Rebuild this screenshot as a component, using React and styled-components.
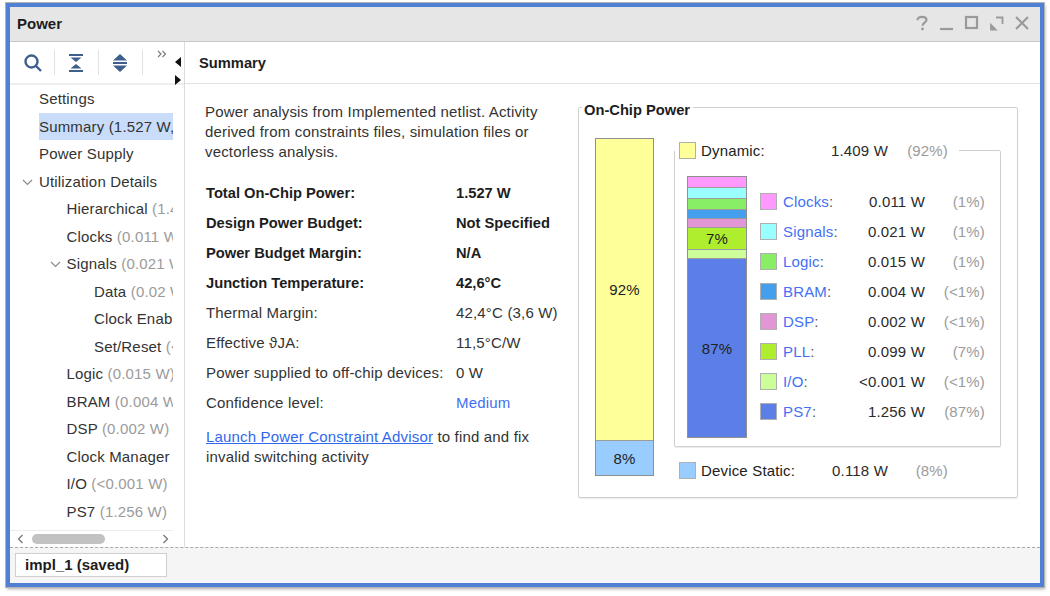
import React from "react";
import styled, { createGlobalStyle } from "styled-components";

const Global = createGlobalStyle`
  html, body { margin: 0; padding: 0; background: #fff; }
  body { font-family: "Liberation Sans", Arial, sans-serif; font-size: 15px; letter-spacing: 0.17px; color: #222; }
  #root { width: 1050px; height: 596px; overflow: hidden; }
`;

const Win = styled.div`
  box-sizing: border-box;
  margin: 3px 0 0 6px;
  width: 1038px;
  height: 584px;
  border: 4px solid #4f80d3;
  display: flex;
  flex-direction: column;
  box-shadow: 0 0 0 1px #b4b4b4, 1px 2px 3px rgba(0, 0, 0, 0.35);
  background: #fff;
`;
const TitleBar = styled.div`
  height: 35px;
  box-sizing: border-box;
  flex: none;
  background: #e6e6e6;
  border-bottom: 1px solid #c8c8c8;
  display: flex;
  align-items: center;
  padding: 0 10px 2px 7px;
`;
const Title = styled.div`
  font-weight: 700;
  font-size: 15px;
  letter-spacing: 0;
  color: #1d1d1d;
  flex: 1;
`;
const WinBtns = styled.div`
  display: flex;
  gap: 9px;
  align-items: center;
`;
const Body = styled.div`
  flex: 1;
  min-height: 0;
  display: flex;
`;
const Side = styled.div`
  position: relative;
  width: 175px;
  box-sizing: border-box;
  flex: none;
  border-right: 1px solid #dcdcdc;
  display: flex;
  flex-direction: column;
`;
const Toolbar = styled.div`
  height: 43px;
  box-sizing: border-box;
  flex: none;
  border-bottom: 2px solid #eeeeee;
  display: flex;
  align-items: center;
  padding-left: 12px;
`;
const ToolBtn = styled.div`
  width: 22px;
  display: flex;
  justify-content: center;
`;
const ToolSep = styled.div`
  width: 1px;
  height: 25px;
  background: #e2e2e2;
  margin: 0 10px 0 11px;
  &:nth-child(2) { margin-left: 10px; }
`;
const More = styled.div`
  align-self: flex-start;
  margin: 8px 0 0 4px;
  line-height: 0;
`;
const Splitter = styled.div`
  position: absolute;
  left: 165px;
  top: ${(p) => p.$top}px;
  width: 0;
  height: 0;
  border-top: 5.5px solid transparent;
  border-bottom: 5.5px solid transparent;
  ${(p) => (p.$dir === "left" ? "border-right: 6px solid #111;" : "border-left: 6px solid #111;")}
`;
const Tree = styled.div`
  flex: 1;
  min-height: 0;
  width: 163px;
  overflow: hidden;
`;
const Row = styled.div`
  position: relative;
  height: 27.53px;
  display: flex;
  align-items: center;
  padding-left: ${(p) => 29 + p.$level * 27.5}px;
  white-space: nowrap;
  color: #333;
`;
const Label = styled.div`
  flex: 1;
  height: 100%;
  line-height: 27.53px;
  background: ${(p) => (p.$selected ? "#c9ddfa" : "transparent")};
`;
const Dim = styled.span`
  color: #9b9b9b;
`;
const Chevron = styled.svg`
  position: absolute;
  left: ${(p) => 12 + p.$level * 27.5}px;
  top: 11px;
`;
const HScroll = styled.div`
  height: 17px;
  width: 163px;
  flex: none;
  border-top: 1px solid #ececec;
  box-sizing: border-box;
  display: flex;
  align-items: center;
  padding: 0 4px 0 7px;
  gap: 8px;
`;
const Track = styled.div`
  flex: 1;
`;
const Thumb = styled.div`
  width: 73px;
  height: 10px;
  border-radius: 5px;
  background: #c2c2c2;
`;
const Main = styled.div`
  flex: 1;
  min-width: 0;
  display: flex;
  flex-direction: column;
`;
const MainHead = styled.div`
  height: 42px;
  box-sizing: border-box;
  flex: none;
  border-bottom: 1px solid #e2e2e2;
  display: flex;
  align-items: center;
  padding-left: 14px;
  font-weight: 700;
  font-size: 14.7px;
  letter-spacing: 0;
  color: #1d1d1d;
`;
const Content = styled.div`
  flex: 1;
  display: flex;
  min-height: 0;
`;
const Left = styled.div`
  width: 393px;
  flex: none;
  padding: 18px 0 0 20px;
  box-sizing: border-box;
  color: #333;
`;
const Para = styled.p`
  margin: 0;
  line-height: 20px;
`;
const Facts = styled.div`
  margin-top: 16px;
  margin-left: 1px;
`;
const Fact = styled.div`
  display: grid;
  grid-template-columns: 250px 1fr;
  height: 30px;
  box-sizing: border-box;
  padding-bottom: ${(p) => (p.$bold ? 0 : 2)}px;
  align-items: center;
  white-space: nowrap;
  font-weight: ${(p) => (p.$bold ? 700 : 400)};
  font-size: ${(p) => (p.$bold ? "14.7px" : "15px")};
  letter-spacing: ${(p) => (p.$bold ? "0" : "0.17px")};
  color: ${(p) => (p.$bold ? "#1d1d1d" : "#333")};
`;
const Link = styled.span`
  color: #3f6ff2;
`;
const Advisor = styled.p`
  margin: 9px 0 0 1px;
  line-height: 20px;
`;
const Under = styled.a`
  color: #2f68ee;
  text-decoration: underline;
`;
const Chart = styled.fieldset`
  box-sizing: border-box;
  margin: 12px 0 0 0;
  width: 440px;
  height: 402px;
  padding: 20px 16px 0;
  border: 1px solid #cfcfcf;
  border-radius: 2px;
  box-shadow: 0 1px 1px rgba(0, 0, 0, 0.08);
  display: flex;
`;
const ChartLegend = styled.legend`
  font-weight: 700;
  font-size: 14.7px;
  letter-spacing: 0;
  color: #1d1d1d;
  margin-left: -13px;
  padding: 6px 3px 0 2px;
  line-height: 16px;
`;
const Flex = styled.div`
  display: flex;
  align-items: flex-start;
`;
const MainBar = styled.div`
  width: 59px;
  height: 338px;
  box-sizing: border-box;
  border: 1px solid #8f8f8f;
  display: flex;
  flex-direction: column;
  flex: none;
`;
const Seg = styled.div`
  height: ${(p) => p.$h}px;
  flex: ${(p) => (p.$fill ? "1" : "none")};
  box-sizing: border-box;
  background: ${(p) => p.$c};
  border-top: ${(p) => (p.$first ? "none" : "1px solid #9c9c9c")};
  display: flex;
  align-items: center;
  justify-content: center;
  color: #222;
`;
const RightCol = styled.div`
  margin: 3px 0 0 20px;
  width: 327px;
  flex: none;
`;
const Group = styled.fieldset`
  box-sizing: border-box;
  margin: 0;
  width: 327px;
  height: 306px;
  padding: 17px 12px 0;
  border: 1px solid #cfcfcf;
  border-radius: 2px;
  box-shadow: 0 1px 1px rgba(0, 0, 0, 0.08);
  display: flex;
  gap: 13px;
`;
const GroupLegend = styled.legend`
  margin-left: -12px;
  padding: 0 11px 0 4px;
`;
const TopRow = styled.div`
  display: grid;
  grid-template-columns: 17px 110px 82px 60px;
  height: 18px;
  align-items: center;
  margin-left: ${(p) => p.$ml || 0}px;
  margin-top: ${(p) => p.$mt || 0}px;
`;
const Name = styled.span`
  padding-left: 5px;
  white-space: nowrap;
`;
const Value = styled.span`
  text-align: right;
  white-space: nowrap;
  color: #2b2b2b;
`;
const Pct = styled.span`
  text-align: right;
  white-space: nowrap;
  color: #9b9b9b;
`;
const Swatch = styled.span`
  width: 17px;
  height: 17px;
  box-sizing: border-box;
  border: 1px solid #b0b0b0;
  background: ${(p) => p.$c};
  display: block;
`;
const Stack = styled.div`
  width: 60px;
  height: 262px;
  box-sizing: border-box;
  border: 1px solid #8f8f8f;
  display: flex;
  flex-direction: column;
  flex: none;
`;
const Items = styled.div`
  margin-top: 10px;
`;
const Item = styled.div`
  display: grid;
  grid-template-columns: 17px 66px 82px 60px;
  height: 30px;
  align-items: center;
`;
const ItemName = styled.span`
  padding-left: 6px;
  white-space: nowrap;
  color: #555;
`;
const ItemLink = styled.span`
  color: #4470f5;
`;
const Footer = styled.div`
  height: 36px;
  flex: none;
  box-sizing: border-box;
  background: #f5f5f5;
  border-top: 1px dashed #a8a8a8;
  padding: 5px 0 0 5px;
`;
const Tab = styled.div`
  width: 152px;
  height: 24px;
  box-sizing: border-box;
  background: #fff;
  border: 1px solid #d0d0d0;
  font-weight: 700;
  font-size: 15px;
  letter-spacing: 0;
  line-height: 22px;
  padding-left: 9px;
  color: #1d1d1d;
`;

const treeData = [
  { t: "Settings", l: 0 },
  { t: "Summary (1.527 W, Confidence", l: 0, sel: true },
  { t: "Power Supply", l: 0 },
  { t: "Utilization Details", l: 0, open: true },
  { t: "Hierarchical", d: " (1.409 W)", l: 1 },
  { t: "Clocks", d: " (0.011 W)", l: 1 },
  { t: "Signals", d: " (0.021 W)", l: 1, open: true },
  { t: "Data", d: " (0.02 W)", l: 2 },
  { t: "Clock Enable", d: " (0.001 W)", l: 2 },
  { t: "Set/Reset", d: " (<0.001 W)", l: 2 },
  { t: "Logic", d: " (0.015 W)", l: 1 },
  { t: "BRAM", d: " (0.004 W)", l: 1 },
  { t: "DSP", d: " (0.002 W)", l: 1 },
  { t: "Clock Manager", d: " (0.099 W)", l: 1 },
  { t: "I/O", d: " (<0.001 W)", l: 1 },
  { t: "PS7", d: " (1.256 W)", l: 1 },
];

const facts = [
  ["Total On-Chip Power:", "1.527 W", true],
  ["Design Power Budget:", "Not Specified", true],
  ["Power Budget Margin:", "N/A", true],
  ["Junction Temperature:", "42,6°C", true],
  ["Thermal Margin:", "42,4°C (3,6 W)"],
  ["Effective ϑJA:", "11,5°C/W"],
  ["Power supplied to off-chip devices:", "0 W"],
  ["Confidence level:", <Link key="m">Medium</Link>],
];

const items = [
  ["Clocks", "0.011 W", "(1%)", "#ff99ff"],
  ["Signals", "0.021 W", "(1%)", "#99ffff"],
  ["Logic", "0.015 W", "(1%)", "#88ee66"],
  ["BRAM", "0.004 W", "(<1%)", "#44a0ee"],
  ["DSP", "0.002 W", "(<1%)", "#e396d6"],
  ["PLL", "0.099 W", "(7%)", "#afee2e"],
  ["I/O", "<0.001 W", "(<1%)", "#ccff99"],
  ["PS7", "1.256 W", "(87%)", "#5b7fe6"],
];

const stack = [
  ["#ff99ff", 10],
  ["#99ffff", 11],
  ["#88ee66", 11],
  ["#44a0ee", 9],
  ["#e396d6", 9],
  ["#afee2e", 22, "7%"],
  ["#ccff99", 9],
  ["#5b7fe6", 0, "87%"],
];

const Gray = "#9a9a9a";

function WindowIcons() {
  return (
    <WinBtns>
      <svg width="16" height="16" viewBox="0 0 16 16" fill="none" stroke={Gray} strokeWidth="2.2">
        <path d="M3.500 5.200C3.500 3 5.500 1.800 8 1.800s4.500 1.200 4.500 3.200c0 2.800-4 2.600-4 5.800" />
        <circle cx="8.500" cy="14" r="1.400" fill={Gray} stroke="none" />
      </svg>
      <svg width="16" height="16" viewBox="0 0 16 16" fill="none" stroke={Gray} strokeWidth="2.2">
        <path d="M1 14h13" />
      </svg>
      <svg width="16" height="16" viewBox="0 0 16 16" fill="none" stroke={Gray} strokeWidth="2.2">
        <rect x="2" y="2" width="11" height="11" />
      </svg>
      <svg width="16" height="16" viewBox="0 0 16 16" fill="none" stroke={Gray} strokeWidth="1.800">
        <path d="M7 2.500h6.500V9" />
        <path d="M2 14.500V10l4.500 4.500z" fill={Gray} />
      </svg>
      <svg width="16" height="16" viewBox="0 0 16 16" fill="none" stroke={Gray} strokeWidth="2.200">
        <path d="M2 2l12 12M14 2L2 14" />
      </svg>
    </WinBtns>
  );
}

const Down = ({ level }) => (
  <Chevron $level={level} width="11" height="7" viewBox="0 0 11 7" fill="none" stroke="#8a8a8a" strokeWidth="1.200">
    <path d="M1 1l4.500 4.500L10 1" />
  </Chevron>
);

export default function App() {
  return (
    <>
      <Global />
      <Win>
        <TitleBar>
          <Title>Power</Title>
          <WindowIcons />
        </TitleBar>
        <Body>
          <Side>
            <Toolbar>
              <ToolBtn>
                <svg width="20" height="20" viewBox="0 0 20 20" fill="none" stroke="#3e5f8c" strokeWidth="2.400">
                  <circle cx="8.500" cy="8.500" r="6" />
                  <path d="M13 13l5 5" />
                </svg>
              </ToolBtn>
              <ToolSep />
              <ToolBtn>
                <svg width="16" height="18" viewBox="0 0 16 18" fill="#3e5f8c">
                  <path d="M1 0h14v2H1zM2.500 3.500h11L8 8zM8 10l5.500 4.500h-11zM1 16h14v2H1z" />
                </svg>
              </ToolBtn>
              <ToolSep />
              <ToolBtn>
                <svg width="16" height="18" viewBox="0 0 16 18" fill="#3e5f8c">
                  <path d="M8 0l7 6.500H1zM1 8h14v2H1zM1 11.500h14L8 18z" />
                </svg>
              </ToolBtn>
              <ToolSep />
              <More>
                <svg width="10" height="8" viewBox="0 0 10 8" fill="none" stroke="#777" strokeWidth="1.100">
                  <path d="M1 1l3 3-3 3M5.500 1l3 3-3 3" />
                </svg>
              </More>
            </Toolbar>
            <Splitter $dir="left" $top={15} />
            <Splitter $dir="right" $top={33} />
            <Tree>
              {treeData.map((r) => (
                <Row key={r.t} $level={r.l}>
                  {r.open && <Down level={r.l} />}
                  <Label $selected={r.sel}>
                    {r.t}
                    {r.d && <Dim>{r.d}</Dim>}
                  </Label>
                </Row>
              ))}
            </Tree>
            <HScroll>
              <svg width="7" height="10" viewBox="0 0 7 10" fill="none" stroke="#777" strokeWidth="1.300">
                <path d="M5.500 1l-4 4 4 4" />
              </svg>
              <Track>
                <Thumb />
              </Track>
              <svg width="7" height="10" viewBox="0 0 7 10" fill="none" stroke="#777" strokeWidth="1.300">
                <path d="M1.500 1l4 4-4 4" />
              </svg>
            </HScroll>
          </Side>
          <Main>
            <MainHead>Summary</MainHead>
            <Content>
              <Left>
                <Para>
                  Power analysis from Implemented netlist. Activity
                  <br />
                  derived from constraints files, simulation files or
                  <br />
                  vectorless analysis.
                </Para>
                <Facts>
                  {facts.map(([a, b, bold]) => (
                    <Fact key={a} $bold={bold}>
                      <span>{a}</span>
                      <span>{b}</span>
                    </Fact>
                  ))}
                </Facts>
                <Advisor>
                  <Under>Launch Power Constraint Advisor</Under> to find and fix
                  <br />
                  invalid switching activity
                </Advisor>
              </Left>
              <Chart>
                <ChartLegend>On-Chip Power</ChartLegend>
                <Flex>
                  <MainBar>
                    <Seg $c="#ffff99" $fill $first>92%</Seg>
                    <Seg $c="#99ccff" $h={35}>8%</Seg>
                  </MainBar>
                  <RightCol>
                    <Group>
                      <GroupLegend>
                        <TopRow>
                          <Swatch $c="#ffff99" />
                          <Name>Dynamic:</Name>
                          <Value>1.409 W</Value>
                          <Pct>(92%)</Pct>
                        </TopRow>
                      </GroupLegend>
                      <Stack>
                        {stack.map(([c, h, t], i) => (
                          <Seg key={c} $c={c} $h={h} $fill={!h} $first={i === 0}>
                            {t}
                          </Seg>
                        ))}
                      </Stack>
                      <Items>
                        {items.map(([n, v, p, c]) => (
                          <Item key={n}>
                            <Swatch $c={c} />
                            <ItemName>
                              <ItemLink>{n}</ItemLink>:
                            </ItemName>
                            <Value>{v}</Value>
                            <Pct>{p}</Pct>
                          </Item>
                        ))}
                      </Items>
                    </Group>
                    <TopRow $ml={5} $mt={14}>
                      <Swatch $c="#99ccff" />
                      <Name>Device Static:</Name>
                      <Value>0.118 W</Value>
                      <Pct>(8%)</Pct>
                    </TopRow>
                  </RightCol>
                </Flex>
              </Chart>
            </Content>
          </Main>
        </Body>
        <Footer>
          <Tab>impl_1 (saved)</Tab>
        </Footer>
      </Win>
    </>
  );
}
